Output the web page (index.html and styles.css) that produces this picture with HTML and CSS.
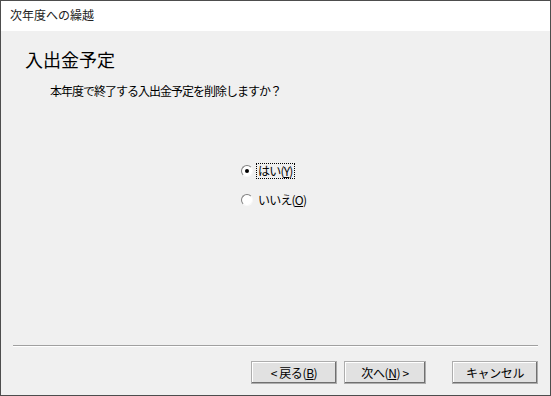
FILE: index.html
```html
<!DOCTYPE html>
<html lang="ja">

<head>
    <meta charset="UTF-8">
    <title>次年度への繰越</title>
    <link rel="stylesheet" href="styles.css">
</head>

<body>
    <div class="window">
        <div class="titlebar">次年度への繰越</div>
        <div class="content">
            <h1 class="heading">入出金予定</h1>
            <p class="question">本年度で終了する入出金予定を削除しますか？</p>
            <div class="choices">
                <label class="choice"><input type="radio" name="del" checked><span class="focus">はい(<u>Y</u>)</span></label>
                <label class="choice"><input type="radio" name="del"><span>いいえ(<u>O</u>)</span></label>
            </div>
            <div class="separator"></div>
            <div class="buttons">
                <button>&lt; 戻る(<u>B</u>)</button>
                <button class="next">次へ(<u>N</u>) &gt;</button>
                <button class="cancel">キャンセル</button>
            </div>
        </div>
    </div>
</body>

</html>
```

FILE: styles.css
```css
* {
    margin: 0;
    padding: 0;
    box-sizing: border-box;
}

body {
    font-family: "Noto Sans CJK JP", "Liberation Sans", sans-serif;
    font-size: 12px;
    color: #000;
}

.window {
    width: 551px;
    height: 396px;
    border: 1px solid #4d4d4d;
    background-color: #f0f0f0;
    display: flex;
    flex-direction: column;
}

.titlebar {
    height: 30px;
    background-color: #fff;
    padding: 6px 0 0 9px;
    line-height: 16px;
    color: #222;
}

.content {
    flex: 1;
    display: flex;
    flex-direction: column;
}

.heading {
    font-size: 18px;
    font-weight: normal;
    line-height: 24px;
    margin: 16px 0 0 24px;
}

.question {
    margin: 12px 0 0 49px;
    line-height: 16px;
    letter-spacing: -1px;
}

.choices {
    margin: 63px 0 0 239px;
    display: flex;
    flex-direction: column;
    gap: 11px;
}

.choice {
    display: flex;
    align-items: center;
    height: 18px;
    letter-spacing: -0.8px;
}

.choice input {
    appearance: none;
    width: 12px;
    height: 12px;
    margin: 0 3px 0 1px;
    border-radius: 50%;
    border: 1px solid;
    border-color: #808080 #f8f8f8 #f8f8f8 #808080;
    background-color: #fff;
    display: flex;
    align-items: center;
    justify-content: center;
}

.choice input:checked::after {
    content: "";
    width: 4px;
    height: 4px;
    border-radius: 50%;
    background-color: #000;
}

.choice span {
    padding: 0 1px;
    border: 1px solid transparent;
    line-height: 14px;
}

.choice .focus {
    border: 1px dotted #000;
}

.separator {
    margin: 136px 12px 0 12px;
    height: 2px;
    border-top: 1px solid #a0a0a0;
    border-bottom: 1px solid #fff;
}

.buttons {
    display: flex;
    margin: 14px 0 0 250px;
}

button {
    width: 86px;
    height: 23px;
    font-family: inherit;
    font-size: 12px;
    background-color: #e1e1e1;
    border: 1px solid #adadad;
    box-shadow: inset -1px -1px 0 #707070, inset 1px 1px 0 #fff;
    letter-spacing: -0.4px;
}

.next {
    margin-left: 7px;
    width: 82px;
}

.cancel {
    margin-left: 26px;
}
```
